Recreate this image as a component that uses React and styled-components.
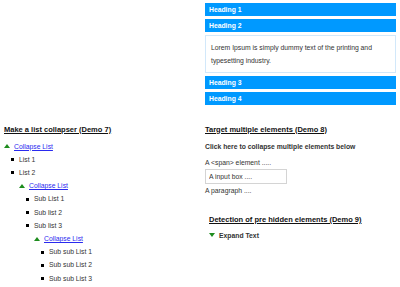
import React from "react";
import styled, { createGlobalStyle } from "styled-components";

const Global = createGlobalStyle`
  html, body { margin: 0; padding: 0; background: #fff; }
  body { font-family: "Liberation Sans", Arial, sans-serif; color: #333; }
`;

const Page = styled.div`
  width: 400px;
  height: 287px;
  box-sizing: border-box;
  padding: 3px 4px 0 4px;
  overflow: hidden;
`;

const Row = styled.div`
  display: grid;
  grid-template-columns: 201px 191px;
  margin-top: ${(p) => p.$top || 0}px;
`;

const Accordion = styled.div`
  display: flex;
  flex-direction: column;
  gap: 3px;
`;

const Bar = styled.div`
  height: 13px;
  line-height: 13px;
  background: #0099ff;
  color: #fff;
  font-weight: bold;
  font-size: 6.8px;
  padding-left: 4px;
`;

const Panel = styled.div`
  border: 1px solid #d2e8fa;
  padding: 5px;
  font-size: 6.8px;
  line-height: 13px;
  color: #333;
`;

const Col = styled.div`
  display: flex;
  flex-direction: column;
  padding-left: ${(p) => p.$indent || 0}px;
`;

const DemoTitle = styled.div`
  font-size: 7.5px;
  font-weight: bold;
  line-height: 13px;
  color: #111;
  text-decoration: underline;
  text-underline-offset: 1px;
  margin-top: ${(p) => p.$top || 0}px;
`;

const Line = styled.div`
  font-size: 6.8px;
  line-height: ${(p) => p.$lh || 13.2}px;
  color: #333;
  font-weight: ${(p) => (p.$bold ? "bold" : "normal")};
  margin-top: ${(p) => p.$top || 0}px;
  display: flex;
  align-items: center;
`;

const Tri = styled.span`
  width: 0;
  height: 0;
  border-left: 3px solid transparent;
  border-right: 3px solid transparent;
  ${(p) =>
    p.$down
      ? "border-top: 4px solid #1e8c1e;"
      : "border-bottom: 4px solid #1e8c1e;"}
  margin-right: 4px;
  flex: none;
`;

const Link = styled.a`
  color: #2a2aef;
  text-decoration: underline;
  cursor: pointer;
`;

const Tree = styled.div`
  margin-top: 4px;
`;

const List = styled.ul`
  list-style: none;
  margin: 0;
  padding: 0 0 0 7px;
`;

const Item = styled.li`
  position: relative;
  padding-left: 8px;
  font-size: 6.8px;
  line-height: 13.2px;
  color: #333;
  &::before {
    content: "";
    position: absolute;
    left: 0;
    top: 5.5px;
    width: 3px;
    height: 3px;
    background: #000;
  }
`;

const Nested = styled.div`
  margin-left: 15px;
`;

const Input = styled.input`
  width: 82px;
  height: 15px;
  box-sizing: border-box;
  border: 1px solid #d4d4d4;
  padding: 0 3px;
  margin: 0;
  font-family: "Liberation Sans", Arial, sans-serif;
  font-size: 6.8px;
  color: #333;
  outline: none;
  &::placeholder { color: #333; }
`;

function Collapser({ children }) {
  return (
    <Line>
      <Tri />
      <Link>{children}</Link>
    </Line>
  );
}

export default function App() {
  return (
    <Page>
      <Global />
      <Row>
        <div />
        <Accordion>
          <Bar>Heading 1</Bar>
          <Bar>Heading 2</Bar>
          <Panel>
            Lorem Ipsum is simply dummy text of the printing and typesetting industry.
          </Panel>
          <Bar>Heading 3</Bar>
          <Bar>Heading 4</Bar>
        </Accordion>
      </Row>
      <Row $top={17.5}>
        <Col>
          <DemoTitle>Make a list collapser (Demo 7)</DemoTitle>
          <Tree>
            <Collapser>Collapse List</Collapser>
            <List>
              <Item>List 1</Item>
              <Item>List 2</Item>
            </List>
            <Nested>
              <Collapser>Collapse List</Collapser>
              <List>
                <Item>Sub List 1</Item>
                <Item>Sub list 2</Item>
                <Item>Sub list 3</Item>
              </List>
              <Nested>
                <Collapser>Collapse List</Collapser>
                <List>
                  <Item>Sub sub List 1</Item>
                  <Item>Sub sub List 2</Item>
                  <Item>Sub sub List 3</Item>
                </List>
              </Nested>
            </Nested>
          </Tree>
        </Col>
        <Col>
          <DemoTitle>Target multiple elements (Demo 8)</DemoTitle>
          <Line $bold $lh={13} $top={4}>Click here to collapse multiple elements below</Line>
          <Line $lh={13} $top={3}>A &lt;span&gt; element .....</Line>
          <Input placeholder="A input box ...." readOnly />
          <Line $lh={13}>A paragraph ....</Line>
          <Col $indent={4}>
            <DemoTitle $top={16}>Detection of pre hidden elements (Demo 9)</DemoTitle>
            <Line $bold $lh={13} $top={3}>
              <Tri $down />
              Expand Text
            </Line>
          </Col>
        </Col>
      </Row>
    </Page>
  );
}
